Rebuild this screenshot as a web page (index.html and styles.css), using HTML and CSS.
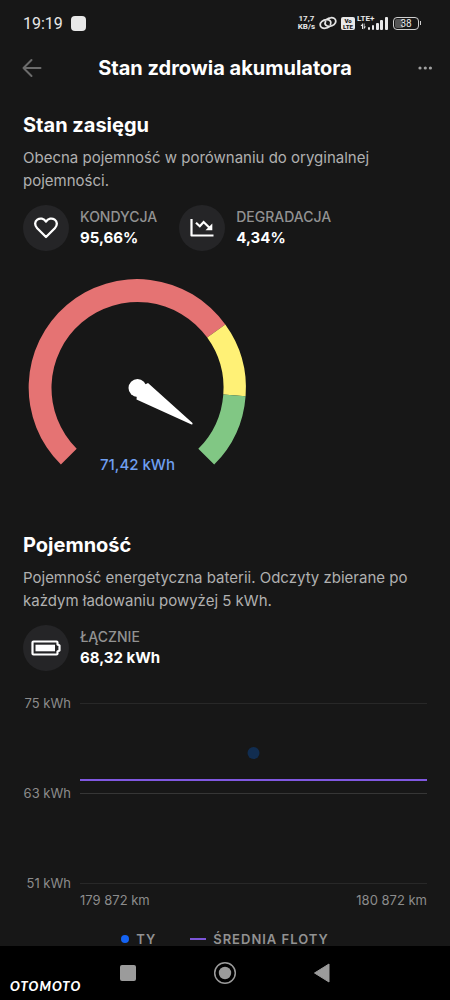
FILE: index.html
```html
<!DOCTYPE html>
<html lang="pl">
<head>
<meta charset="utf-8">
<meta name="viewport" content="width=device-width, initial-scale=1">
<title>Stan zdrowia akumulatora</title>
<link rel="stylesheet" href="styles.css">
</head>
<body>
<div class="status">
  <div class="status-left">
    <span class="clock">19:19</span>
    <span class="app-dot"></span>
  </div>
  <div class="status-right">
    <span class="speed"><span>17,7</span><span>KB/s</span></span>
    <svg class="link-icon" width="18" height="14" viewBox="0 0 18 14" fill="none" stroke="#e4e4e4" stroke-width="1.800" stroke-linecap="round">
      <path d="M11.500 8.500C13 5.500 10.500 3.500 7.500 3.700C4 3.900 1 6.300 1.200 9C1.400 11.700 4 12.600 6.500 12.200C8 12 9.200 11.400 10.200 10.600"/>
      <path d="M6.500 5.500C5 8.500 7.500 10.500 10.500 10.300C14 10.100 17 7.700 16.800 5C16.600 2.300 14 1.400 11.500 1.800C10 2 8.800 2.600 7.800 3.400"/>
    </svg>
    <span class="volte"><span>Vo</span><span>LTE</span></span>
    <span class="signal">
      <span class="lte">LTE+</span>
      <svg width="29" height="14" viewBox="1 0 29 14" fill="#e8e8e8">
        <path d="M4 13V10H2.500L5 7V13zM6.500 7.500V10.500H8L5.700 13.500V7.500z"/>
        <rect x="10" y="11" width="2" height="3" rx="1"/>
        <rect x="14" y="9" width="2" height="5" rx="1"/>
        <rect x="18" y="7" width="3" height="7" rx="1"/>
        <rect x="22" y="4" width="3" height="10" rx="1"/>
        <rect x="27" y="1" width="3" height="13" rx="1"/>
      </svg>
    </span>
    <span class="battery"><span class="battery-body">38</span><span class="battery-tip"></span></span>
  </div>
</div>

<header class="topbar">
  <button class="icon-button" type="button" aria-label="Wstecz">
    <svg width="20" height="20" viewBox="0 0 20 20" fill="none" stroke="#6b6b6b" stroke-width="2" stroke-linecap="round" stroke-linejoin="round"><path d="M18.500 10H1.500M9.500 2L1.500 10L9.500 18"/></svg>
  </button>
  <h1>Stan zdrowia akumulatora</h1>
  <button class="icon-button more" type="button" aria-label="Więcej">
    <svg width="14" height="4" viewBox="0 0 14 4" fill="#a0a0a0"><circle cx="2" cy="2" r="1.600"/><circle cx="7.300" cy="2" r="1.600"/><circle cx="12.400" cy="2" r="1.600"/></svg>
  </button>
</header>

<main>
  <section class="range">
    <h2>Stan zasięgu</h2>
    <p>Obecna pojemność w porównaniu do oryginalnej pojemności.</p>
    <div class="stats">
      <div class="stat">
        <span class="badge"><svg width="24" height="22" viewBox="0 0 24 22" fill="none" stroke="#fff" stroke-width="2.300" stroke-linejoin="round"><path d="M12 20L3.200 11.200C.2 8 .8 4.300 3.300 2.600C6 .8 9.800 1.300 12 4.600C14.200 1.300 18 .8 20.700 2.600C23.200 4.300 23.800 8 20.800 11.200z"/></svg></span>
        <div><div class="label">KONDYCJA</div><div class="value">95,66%</div></div>
      </div>
      <div class="stat">
        <span class="badge"><svg width="24" height="20" viewBox="0 0 24 20" fill="none" stroke="#fff" stroke-width="2.200"><path d="M1.500 1V17.500H23.500" stroke-linejoin="round"/><path d="M6 4.800L9.800 8.300L13.600 4L19.500 9.800"/><path d="M22.300 5.500V12.300H15.500z" fill="#fff" stroke="none"/></svg></span>
        <div><div class="label">DEGRADACJA</div><div class="value">4,34%</div></div>
      </div>
    </div>
    <svg class="gauge" width="229" height="208" viewBox="0 0 229 208" role="img" aria-label="71,42 kWh">
      <path fill="#e57373" d="M37.900 192.600A108.400 108.400 0 1 1 202.300 52.500L184.200 65.600A86 86 0 1 0 53.700 176.800z"/>
      <path fill="#fff176" d="M202.300 52.500A108.400 108.400 0 0 1 222.600 124.200L200.300 122.400A86 86 0 0 0 184.200 65.600z"/>
      <path fill="#81c784" d="M222.600 124.200A108.400 108.400 0 0 1 191.200 192.600L175.300 176.800A86 86 0 0 0 200.300 122.400z"/>
      <circle cx="114.500" cy="116" r="9" fill="#fff"/>
      <path fill="#fff" d="M125 111L169.500 151Q170 152.500 168.500 152.500L113.500 127.500L114.500 116L122 112.500z"/>
      <text x="114.500" y="198" text-anchor="middle">71,42 kWh</text>
    </svg>
  </section>

  <section class="capacity">
    <h2>Pojemność</h2>
    <p>Pojemność energetyczna baterii. Odczyty zbierane po każdym ładowaniu powyżej 5 kWh.</p>
    <div class="stats">
      <div class="stat">
        <span class="badge"><svg width="30" height="16" viewBox="0 0 30 16"><path d="M2.500 1.500H25.500Q26.500 1.500 26.500 2.500V4.500L28.500 5.500V10.500L26.500 11.500V13.500Q26.500 14.500 25.500 14.500H2.500Q1.500 14.500 1.500 13.500V2.500Q1.500 1.500 2.500 1.500z" fill="none" stroke="#fff" stroke-width="2.200" stroke-linejoin="round"/><rect x="4.500" y="4.700" width="19.500" height="6.600" fill="#fff"/></svg></span>
        <div><div class="label">ŁĄCZNIE</div><div class="value">68,32 kWh</div></div>
      </div>
    </div>
    <div class="chart">
      <div class="y-axis"><span>75 kWh</span><span>63 kWh</span><span>51 kWh</span></div>
      <svg class="plot" viewBox="0 0 347 182" preserveAspectRatio="none" aria-hidden="true">
        <path d="M0 1.500H347M0 181.500H347" stroke="#282828"/>
        <path d="M0 91.500H347" stroke="#363636"/>
        <path d="M0 78H347" stroke="#8058e0" stroke-width="2"/>
        <circle cx="173.500" cy="51" r="6" fill="#112d50"/>
      </svg>
      <div class="x-axis"><span>179 872 km</span><span>180 872 km</span></div>
    </div>
    <div class="legend">
      <span class="legend-item"><span class="key-dot"></span>TY</span>
      <span class="legend-item"><span class="key-line"></span>ŚREDNIA FLOTY</span>
    </div>
  </section>
</main>

<nav class="navbar">
  <span class="brand">OTOMOTO</span>
  <div class="nav-keys">
    <button type="button" aria-label="Ostatnie"><svg width="18" height="18" viewBox="0 0 18 18"><rect x="1" y="1" width="16" height="16" rx="2" fill="#9b9b9b"/></svg></button>
    <button type="button" aria-label="Ekran główny"><svg width="24" height="24" viewBox="0 0 24 24"><circle cx="12" cy="12" r="10.300" fill="none" stroke="#9b9b9b" stroke-width="1.500"/><circle cx="12" cy="12" r="6.200" fill="#9b9b9b"/></svg></button>
    <button type="button" aria-label="Powrót"><svg width="18" height="20" viewBox="0 0 18 20"><path d="M16 1V19L1.500 10z" fill="#9b9b9b" stroke="#9b9b9b" stroke-linejoin="round"/></svg></button>
  </div>
</nav>
</body>
</html>
```
FILE: styles.css
```css
* { box-sizing: border-box; }
body {
  margin: 0;
  min-height: 100vh;
  display: flex;
  flex-direction: column;
  background: #171717;
  color: #fff;
  font-family: Inter, "Liberation Sans", sans-serif;
}
svg { display: block; flex: none; }
button { border: 0; padding: 0; background: none; cursor: pointer; }

.status {
  height: 46px;
  padding: 0 29px 0 23px;
  display: flex;
  align-items: center;
  justify-content: space-between;
  color: #e8e8e8;
  font-family: Roboto, sans-serif;
}
.status-left { display: flex; align-items: center; gap: 8px; }
.clock { font-size: 16px; }
.app-dot { width: 15px; height: 15px; border-radius: 4px; background: #e8e8e8; }
.status-right { display: flex; align-items: center; gap: 4px; }
.speed { display: grid; font-size: 8px; line-height: 8px; font-weight: 700; text-align: center; }
.volte {
  display: grid;
  width: 14px;
  height: 13px;
  padding-top: 1px;
  border-radius: 2px;
  background: #e8e8e8;
  color: #171717;
  font-size: 6px;
  line-height: 6px;
  font-weight: 900;
  text-align: center;
}
.signal { position: relative; }
.lte { position: absolute; left: -2px; top: -1px; font-size: 8px; line-height: 8px; font-weight: 700; }
.battery { display: flex; align-items: center; gap: 1px; padding-left: 1px; }
.battery-body {
  width: 26px;
  height: 13px;
  border: 1px solid #cfcfcf;
  border-radius: 4px;
  background: linear-gradient(90deg, #555 38%, transparent 38%);
  background-clip: content-box;
  padding: 1px;
  font-size: 10px;
  line-height: 10px;
  text-align: center;
}
.battery-tip { width: 1px; height: 4px; background: #cfcfcf; }

.topbar {
  height: 43px;
  padding: 0 18px 0 22px;
  display: grid;
  grid-template-columns: 20px 1fr 24px;
  align-items: center;
}
.icon-button { display: flex; align-items: center; }
.more { justify-content: flex-end; }
h1 { margin: 0; font-size: 20px; line-height: 28px; font-weight: 700; text-align: center; }

main { flex: 1; padding: 22px 23px 0; }
h2 { margin: 0; font-size: 20px; line-height: 28px; font-weight: 700; }
p { margin: 7px 0 0; font-size: 15px; line-height: 23px; color: #b0b0b0; }
.stats { display: flex; gap: 22px; margin-top: 13px; }
.stat { display: flex; align-items: center; gap: 11px; }
.badge {
  width: 46px;
  height: 46px;
  border-radius: 50%;
  display: grid;
  place-items: center;
  background: #252527;
}
.label { font-size: 14px; line-height: 20px; font-weight: 500; color: #929292; }
.value { font-size: 15px; line-height: 22px; font-weight: 700; }

.gauge { margin-top: 21px; }
.gauge text { font-size: 15px; font-weight: 500; fill: #6f9ff0; }
.capacity { margin-top: 51px; }

.chart {
  margin-top: 31px;
  display: grid;
  grid-template-columns: 48px 1fr;
  column-gap: 9px;
  font-size: 13px;
  color: #8c8c8c;
}
.y-axis {
  margin: -9px 0 -9px;
  display: flex;
  flex-direction: column;
  justify-content: space-between;
  text-align: right;
  line-height: 20px;
  white-space: nowrap;
}
.plot { width: 100%; height: 182px; }
.x-axis {
  grid-column: 2;
  margin-top: 6px;
  display: flex;
  justify-content: space-between;
  line-height: 20px;
}
.legend {
  margin-top: 22px;
  display: flex;
  justify-content: center;
  gap: 34px;
  font-size: 13px;
  line-height: 14px;
  font-weight: 600;
  letter-spacing: 1px;
  color: #929292;
}
.legend-item { display: flex; align-items: center; gap: 7px; }
.key-dot { width: 8px; height: 8px; border-radius: 50%; background: #1463f3; }
.key-line { width: 16px; height: 2px; background: #7c55d8; }

.navbar {
  height: 54px;
  padding: 0 10px;
  display: grid;
  grid-template-columns: 74px 1fr 74px;
  align-items: center;
  background: #000;
}
.brand {
  align-self: end;
  padding-bottom: 6px;
  font-family: Lato, sans-serif;
  font-size: 13px;
  line-height: 16px;
  font-weight: 900;
  font-style: italic;
  letter-spacing: 1px;
}
.nav-keys { display: flex; justify-content: space-between; padding: 0 35px; }
.nav-keys button { display: flex; align-items: center; }
```
